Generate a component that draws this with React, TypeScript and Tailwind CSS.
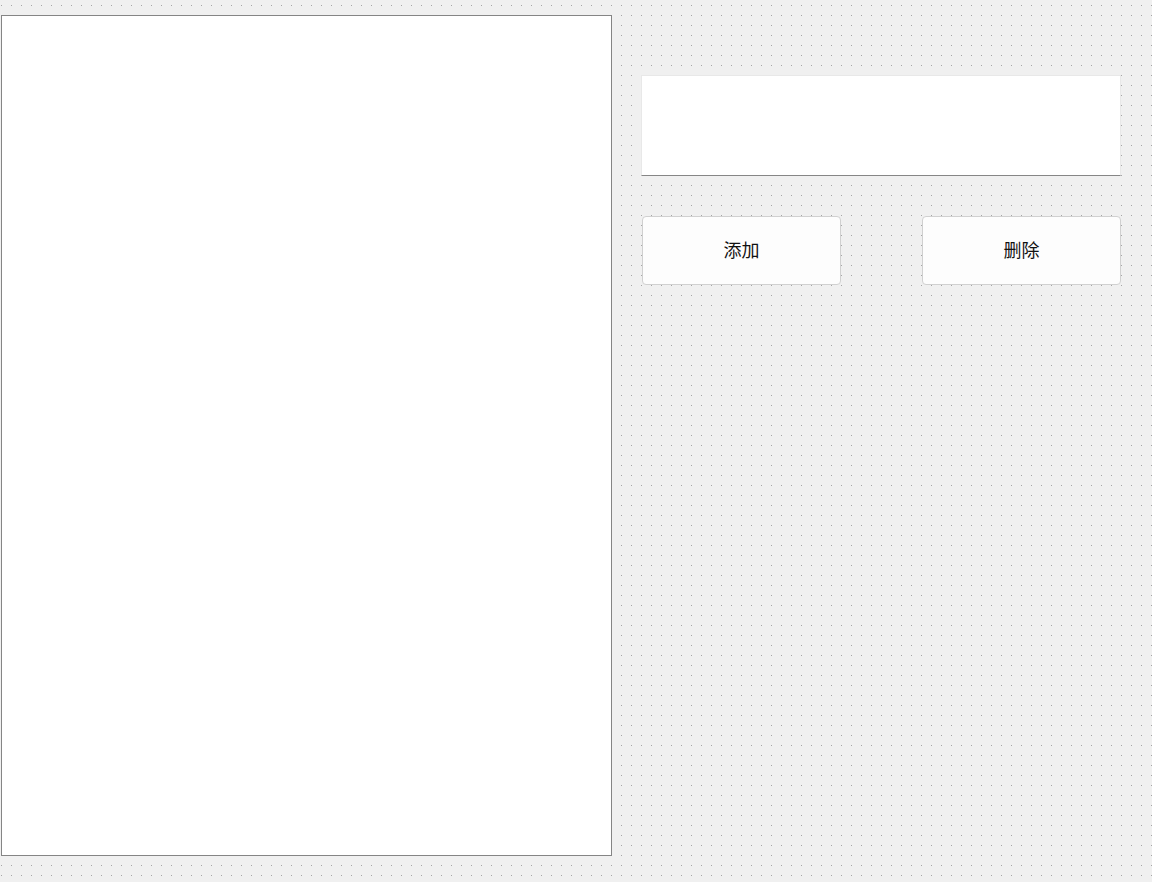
export default function App() {
  return (
    <div
      className="w-[1152px] h-[882px] bg-[#f0f0f0] bg-[conic-gradient(from_270deg_at_1px_1px,#a6a6a6_25%,transparent_0)] bg-[size:10px_10px] bg-[position:1px_5px] flex items-start overflow-hidden"
      style={{ fontFamily: '"Noto Sans CJK SC", "Noto Sans", sans-serif' }}
    >
      <div className="ml-[1px] mt-[15px] w-[611px] h-[841px] bg-white border border-[#858585] shrink-0" />
      <div className="ml-[29px] mt-[75px] w-[480px] flex flex-col shrink-0">
        <div className="h-[101px] bg-white border border-[#e8e8e8] border-b-[#868686]" />
        <div className="mt-[40px] flex justify-between pl-[1px]">
          <button className="w-[199px] h-[69px] bg-[#fdfdfd] border border-[#d0d0d0] rounded-[4px] text-[18px] font-normal text-[#111111] leading-none flex items-center justify-center pb-[4px]">
            添加
          </button>
          <button className="w-[199px] h-[69px] bg-[#fdfdfd] border border-[#d0d0d0] rounded-[4px] text-[18px] font-normal text-[#111111] leading-none flex items-center justify-center pb-[4px]">
            删除
          </button>
        </div>
      </div>
    </div>
  );
}
